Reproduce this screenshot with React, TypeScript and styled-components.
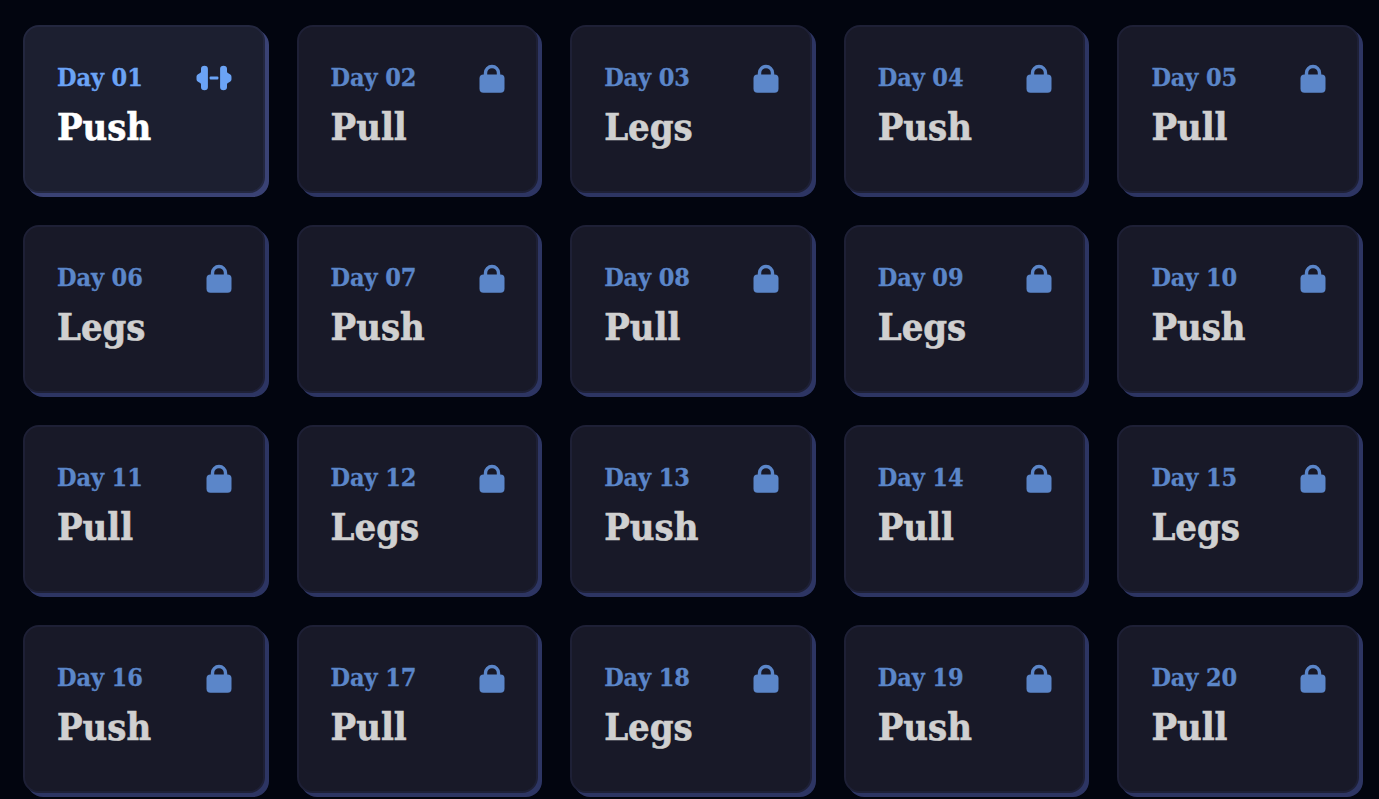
import React from 'react';
import styled, { createGlobalStyle } from 'styled-components';

const GlobalStyle = createGlobalStyle`
    html, body {
        margin: 0;
        height: 100%;
        background: #02050f;
        overflow: hidden;
    }
`;

const Board = styled.main`
    display: grid;
    grid-template-columns: repeat(5, 241.6px);
    grid-auto-rows: 168px;
    gap: 32px;
    padding: 25px 0 0 23px;
    font-family: "DejaVu Serif Condensed", "DejaVu Serif", "Liberation Serif", serif;
`;

const Card = styled.article<{ $active?: boolean }>`
    box-sizing: border-box;
    padding: 36px 31px 0 32px;
    border: 2px solid ${(p) => (p.$active ? '#23273f' : '#1e2036')};
    border-radius: 16px;
    background: ${(p) => (p.$active ? '#1c1f30' : '#181928')};
    box-shadow: 4px 4px 0 ${(p) => (p.$active ? '#3a4274' : '#2d3563')};
`;

const Header = styled.div`
    display: flex;
    align-items: center;
    justify-content: space-between;
    height: 30px;
`;

const DayLabel = styled.span<{ $active?: boolean }>`
    font-size: 25px;
    font-weight: 700;
    line-height: 30px;
    letter-spacing: -0.1px;
    -webkit-text-stroke: 0.3px currentColor;
    color: ${(p) => (p.$active ? '#6ba3f5' : '#5b86c9')};
`;

const Title = styled.h2<{ $active?: boolean }>`
    margin: 12px 0 0;
    font-size: 37.8px;
    font-weight: 700;
    line-height: 44px;
    -webkit-text-stroke: 0.6px currentColor;
    color: ${(p) => (p.$active ? '#ffffff' : '#d0d0d0')};
`;

const LockIcon = () => (
    <svg width="26" height="29" viewBox="0 0 26 29" fill="none" aria-hidden="true">
        <path d="M6.500 12V9a6.500 6.500 0 0 1 13 0v3" stroke="#5b86c9" strokeWidth="3.400" />
        <rect x="0.500" y="10.500" width="25" height="18.200" rx="4" fill="#5b86c9" />
    </svg>
);

const DumbbellIcon = () => (
    <svg width="36" height="26" viewBox="0 0 36 26" fill="#6ba3f5" aria-hidden="true">
        <path d="M8.500 0.800c2.200 0 3.400 1.200 3.400 3v18.400c0 1.800-1.200 3-3.400 3s-3.500-1.200-3.500-3v-2.700c0-.9-.5-1.400-1.300-1.800l-1.700-1c-1.500-1-1.500-1.800-1.500-3.700s0-2.700 1.500-3.700l1.700-1c.8-.4 1.300-.9 1.300-1.800V3.800c0-1.800 1.300-3 3.500-3z" />
        <path d="M27.500 0.800c-2.200 0-3.400 1.200-3.400 3v18.400c0 1.800 1.200 3 3.400 3s3.500-1.200 3.500-3v-2.700c0-.9.500-1.400 1.300-1.800l1.700-1c1.500-1 1.500-1.800 1.500-3.700s0-2.700-1.500-3.700l-1.700-1c-.8-.4-1.300-.9-1.300-1.800V3.800c0-1.800-1.300-3-3.500-3z" />
        <rect x="13.600" y="11.400" width="8.800" height="3.200" rx="1" />
    </svg>
);

const routine = ['Push', 'Pull', 'Legs'];
const days = Array.from({ length: 20 }, (_, i) => ({
    label: `Day ${String(i + 1).padStart(2, '0')}`,
    title: routine[i % 3],
    active: i === 0,
}));

const App: React.FC = () => {
    return (
        <>
            <GlobalStyle />
            <Board>
                {days.map((day) => (
                    <Card key={day.label} $active={day.active}>
                        <Header>
                            <DayLabel $active={day.active}>{day.label}</DayLabel>
                            {day.active ? <DumbbellIcon /> : <LockIcon />}
                        </Header>
                        <Title $active={day.active}>{day.title}</Title>
                    </Card>
                ))}
            </Board>
        </>
    );
};

export default App;
